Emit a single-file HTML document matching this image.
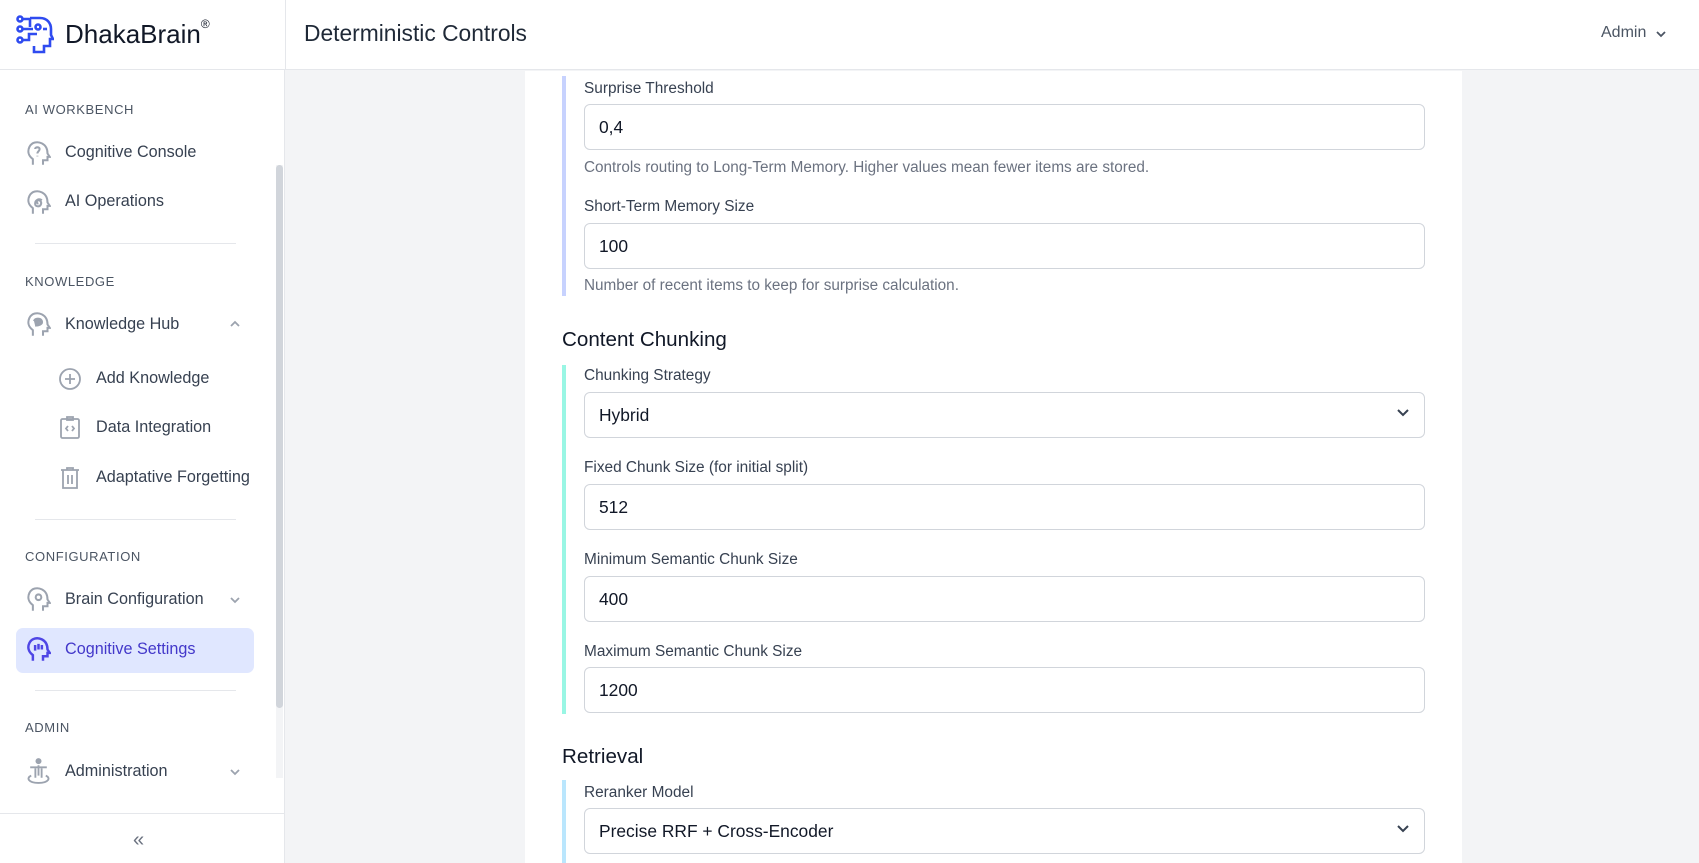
<!DOCTYPE html>
<html><head><meta charset="utf-8"><style>
*{box-sizing:border-box;margin:0;padding:0}
body{width:1699px;height:863px;overflow:hidden;font-family:"Liberation Sans",sans-serif;background:#f3f4f6;position:relative;color:#1f2937}
.hdr{position:absolute;left:0;top:0;width:1699px;height:70px;background:#fff;border-bottom:1px solid #e5e7eb}
.side{position:absolute;left:0;top:70px;width:285px;height:793px;background:#fff;border-right:1px solid #e5e7eb}
.sb{position:absolute;left:285px;top:0;width:1px;height:70px;background:#e5e7eb}
.abs{position:absolute;white-space:nowrap}
.sec{font-size:13px;color:#4b5563;letter-spacing:.6px;left:25px}
.it{font-size:16.2px;color:#374151;left:65px}
.sub{left:96px}
.div{position:absolute;left:35px;width:201px;height:1px;background:#e5e7eb}
.ic{position:absolute}
.card{position:absolute;left:525px;top:71px;width:937px;height:792px;background:#fff}
.bar{position:absolute;left:562px;width:4px}
.lab{font-size:15.4px;color:#374151;left:584px}
.inp{position:absolute;left:584px;width:841px;height:46px;border:1px solid #d1d5db;border-radius:6px;background:#fff;font-size:17.4px;color:#111827;padding:12px 0 0 14px}
.hint{font-size:15.3px;color:#6b7280;left:584px}
.h2{font-size:20.6px;color:#111827;left:562px}
.chev{position:absolute;right:14px;top:15px}
</style></head><body>
<div class="hdr"></div><div class="sb"></div>
<svg class="ic" style="left:16px;top:14px" width="38" height="42" viewBox="0 0 38 42" fill="none" stroke="#2f4bf0" stroke-width="2.6"><path d="M14 4h10c7 0 11 5 11 11v6l2 4h-3v7h-6v6h-10v-6"/><circle cx="4" cy="5" r="2.5"/><circle cx="4" cy="15" r="2.5"/><circle cx="4" cy="26" r="2.5"/><path d="M7 5h7v8M7 15h10M7 26h6v-6h8"/><circle cx="22" cy="13" r="2.5"/><path d="M27 15h4"/></svg>
<div class="abs" style="left:65px;top:19px;font-size:26px;color:#111827">DhakaBrain<sup style="font-size:12px;vertical-align:top;position:relative;top:-2px">®</sup></div>
<div class="abs" style="left:304px;top:20px;font-size:22.8px;color:#1f2937">Deterministic Controls</div>
<div class="abs" style="left:1601px;top:24px;font-size:16px;color:#4b5563">Admin</div>
<svg class="ic" style="left:1655px;top:30px" width="12" height="8" viewBox="0 0 12 8" fill="none" stroke="#4b5563" stroke-width="1.8"><path d="M2 2l4 4 4-4"/></svg>

<div class="side">
<div style="position:absolute;left:276px;top:95px;width:7px;height:613px;background:#f3f4f6"></div>
<div style="position:absolute;left:276px;top:95px;width:7px;height:543px;background:#d1d5db;border-radius:4px"></div>
</div>
<div class="abs sec" style="top:102px">AI WORKBENCH</div>
<div class="abs it" style="top:143px">Cognitive Console</div>
<div class="abs it" style="top:192px">AI Operations</div>
<div class="div" style="top:243px"></div>
<div class="abs sec" style="top:274px">KNOWLEDGE</div>
<div class="abs it" style="top:315px">Knowledge Hub</div>
<div class="abs it sub" style="top:369px">Add Knowledge</div>
<div class="abs it sub" style="top:418px">Data Integration</div>
<div class="abs it sub" style="top:468px">Adaptative Forgetting</div>
<div class="div" style="top:519px"></div>
<div class="abs sec" style="top:549px">CONFIGURATION</div>
<div style="position:absolute;left:16px;top:628px;width:238px;height:45px;background:#e0e7ff;border-radius:7px"></div>
<div class="abs it" style="top:590px">Brain Configuration</div>
<div class="abs it" style="top:640px;color:#4338ca">Cognitive Settings</div>
<div class="div" style="top:690px"></div>
<div class="abs sec" style="top:720px">ADMIN</div>
<div class="abs it" style="top:762px">Administration</div>
<div style="position:absolute;left:0;top:813px;width:285px;height:1px;background:#e5e7eb"></div>
<div class="abs" style="left:133px;top:829px;font-size:20px;color:#6b7280">«</div>
<!-- sidebar icons -->
<svg class="ic" style="left:26px;top:140px" width="25" height="27" viewBox="0 0 22 24" fill="none" stroke="#9ca3af" stroke-width="1.8"><path d="M6 22v-5C2 14 1 10 3 6c2-4 7-5 11-3 4 2 5 6 5 9l2 3h-2v3h-4v4"/><path d="M8 8c0-2 4-2 4 0s-2 2-2 4M10 14v.5"/></svg>
<svg class="ic" style="left:26px;top:189px" width="25" height="27" viewBox="0 0 22 24" fill="none" stroke="#9ca3af" stroke-width="1.8"><path d="M6 22v-5C2 14 1 10 3 6c2-4 7-5 11-3 4 2 5 6 5 9l2 3h-2v3h-4v4"/><path d="M11 13c-2 0-2-3 0-3s3 2 2 4-5 2-5-1 3-5 6-3"/></svg>
<svg class="ic" style="left:26px;top:311px" width="25" height="27" viewBox="0 0 22 24" fill="none" stroke="#9ca3af" stroke-width="1.8"><path d="M6 22v-5C2 14 1 10 3 6c2-4 7-5 11-3 4 2 5 6 5 9l2 3h-2v3h-4v4"/><path d="M7 9c1-3 6-3 7 0 1 3-3 4-6 4" fill="#9ca3af"/></svg>
<svg class="ic" style="left:229px;top:320px" width="12" height="8" viewBox="0 0 12 8" fill="none" stroke="#9ca3af" stroke-width="1.8"><path d="M2 6l4-4 4 4"/></svg>
<svg class="ic" style="left:58px;top:367px" width="24" height="24" viewBox="0 0 24 24" fill="none" stroke="#9ca3af" stroke-width="1.8"><circle cx="12" cy="12" r="10"/><path d="M12 7v10M7 12h10"/></svg>
<svg class="ic" style="left:59px;top:415px" width="22" height="25" viewBox="0 0 22 25" fill="none" stroke="#9ca3af" stroke-width="1.8"><rect x="2" y="4" width="18" height="19" rx="1.5"/><path d="M8 2h6v3H8zM9 11l-2 2.5 2 2.5M13 11l2 2.5-2 2.5"/></svg>
<svg class="ic" style="left:60px;top:466px" width="20" height="24" viewBox="0 0 20 24" fill="none" stroke="#9ca3af" stroke-width="1.8"><path d="M1 4h18M7 4V2h6v2M3 4v18h14V4M8 9v9M12 9v9"/></svg>
<svg class="ic" style="left:26px;top:586px" width="25" height="27" viewBox="0 0 22 24" fill="none" stroke="#9ca3af" stroke-width="1.8"><path d="M6 22v-5C2 14 1 10 3 6c2-4 7-5 11-3 4 2 5 6 5 9l2 3h-2v3h-4v4"/><circle cx="11" cy="10" r="2.5"/></svg>
<svg class="ic" style="left:229px;top:596px" width="12" height="8" viewBox="0 0 12 8" fill="none" stroke="#9ca3af" stroke-width="1.8"><path d="M2 2l4 4 4-4"/></svg>
<svg class="ic" style="left:26px;top:636px" width="25" height="27" viewBox="0 0 22 24" fill="none" stroke="#4f46e5" stroke-width="2.2"><path d="M6 22v-5C2 14 1 10 3 6c2-4 7-5 11-3 4 2 5 6 5 9l2 3h-2v3h-4v4"/><path d="M8 8v5M11 7v5M14 8v4"/></svg>
<svg class="ic" style="left:25px;top:758px" width="27" height="27" viewBox="0 0 26 26" fill="none" stroke="#9ca3af" stroke-width="1.8"><circle cx="13" cy="3" r="2" fill="#9ca3af"/><path d="M5 9h16M13 7v10M10 10v9M16 10v9"/><path d="M6 17c-5 2-3 7 7 7s12-5 7-7"/></svg>
<svg class="ic" style="left:229px;top:768px" width="12" height="8" viewBox="0 0 12 8" fill="none" stroke="#9ca3af" stroke-width="1.8"><path d="M2 2l4 4 4-4"/></svg>

<div class="card"></div>
<div class="bar" style="top:76px;height:220px;background:#c7d2fe"></div>
<div class="abs lab" style="top:80px">Surprise Threshold</div>
<div class="inp" style="top:104px">0,4</div>
<div class="abs hint" style="top:159px">Controls routing to Long-Term Memory. Higher values mean fewer items are stored.</div>
<div class="abs lab" style="top:198px">Short-Term Memory Size</div>
<div class="inp" style="top:223px">100</div>
<div class="abs hint" style="top:277px">Number of recent items to keep for surprise calculation.</div>
<div class="abs h2" style="top:328px">Content Chunking</div>
<div class="bar" style="top:365px;height:349px;background:#99f6e4"></div>
<div class="abs lab" style="top:367px">Chunking Strategy</div>
<div class="inp" style="top:392px">Hybrid<svg class="chev" width="14" height="10" viewBox="0 0 14 10" fill="none" stroke="#374151" stroke-width="2"><path d="M2 2l5 5 5-5"/></svg></div>
<div class="abs lab" style="top:459px">Fixed Chunk Size (for initial split)</div>
<div class="inp" style="top:484px">512</div>
<div class="abs lab" style="top:551px">Minimum Semantic Chunk Size</div>
<div class="inp" style="top:576px">400</div>
<div class="abs lab" style="top:643px">Maximum Semantic Chunk Size</div>
<div class="inp" style="top:667px">1200</div>
<div class="abs h2" style="top:745px">Retrieval</div>
<div class="bar" style="top:780px;height:83px;background:#bae6fd"></div>
<div class="abs lab" style="top:784px">Reranker Model</div>
<div class="inp" style="top:808px">Precise RRF + Cross-Encoder<svg class="chev" width="14" height="10" viewBox="0 0 14 10" fill="none" stroke="#374151" stroke-width="2"><path d="M2 2l5 5 5-5"/></svg></div>
</body></html>
